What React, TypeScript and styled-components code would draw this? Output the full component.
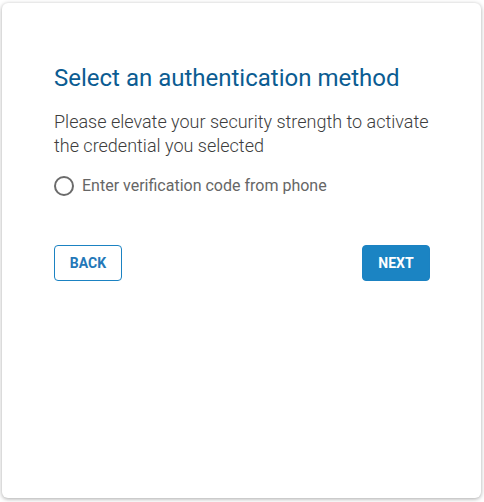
import styled, { createGlobalStyle } from "styled-components";

const GlobalStyle = createGlobalStyle`
  html, body {
    margin: 0;
    padding: 0;
    background: #ffffff;
  }
  body {
    font-family: Roboto, "Liberation Sans", sans-serif;
  }
`;

const Page = styled.div`
  width: 484px;
  height: 502px;
  box-sizing: border-box;
  padding: 3px 3px 4px 2px;
  display: flex;
`;

const Card = styled.div`
  flex: 1;
  background: #ffffff;
  border-radius: 6px;
  box-shadow: 0 1px 4px rgba(0, 0, 0, 0.35);
  padding: 60px 51px 0 52px;
  display: flex;
  flex-direction: column;
`;

const Title = styled.h1`
  margin: 0;
  font-size: 24px;
  line-height: 30px;
  font-weight: 400;
  color: #0b5c92;
`;

const Description = styled.p`
  margin: 17px 0 0;
  font-size: 18px;
  line-height: 24px;
  font-weight: 300;
  color: #3d3d3d;
`;

const Option = styled.label`
  margin-top: 18px;
  display: flex;
  align-items: center;
  gap: 8px;
  font-size: 16px;
  line-height: 20px;
  color: #666666;
  cursor: pointer;
`;

const RadioCircle = styled.span`
  width: 16px;
  height: 16px;
  border: 2px solid #6b6b6b;
  border-radius: 50%;
  flex-shrink: 0;
`;

const Actions = styled.div`
  margin-top: 49px;
  display: flex;
  justify-content: space-between;
`;

const Button = styled.button<{ $primary?: boolean }>`
  height: 36px;
  padding: 0 14px;
  min-width: 68px;
  border-radius: 4px;
  font-family: Roboto, "Liberation Sans", sans-serif;
  font-size: 14px;
  font-weight: 700;
  cursor: pointer;
  border: 1px solid #1b82c2;
  background: ${(p) => (p.$primary ? "#1b84c3" : "#ffffff")};
  color: ${(p) => (p.$primary ? "#ffffff" : "#2478b8")};
`;

export default function App() {
  return (
    <>
      <GlobalStyle />
      <Page>
        <Card>
          <Title>Select an authentication method</Title>
          <Description>
            Please elevate your security strength to activate the credential you
            selected
          </Description>
          <Option>
            <RadioCircle />
            Enter verification code from phone
          </Option>
          <Actions>
            <Button>BACK</Button>
            <Button $primary>NEXT</Button>
          </Actions>
        </Card>
      </Page>
    </>
  );
}
